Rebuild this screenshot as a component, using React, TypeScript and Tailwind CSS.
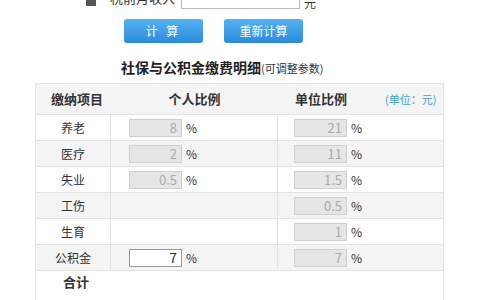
const rows = [
  { name: "养老", p: "8", u: "21" },
  { name: "医疗", p: "2", u: "11" },
  { name: "失业", p: "0.5", u: "1.5" },
  { name: "工伤", p: null, u: "0.5" },
  { name: "生育", p: null, u: "1" },
  { name: "公积金", p: "7", u: "7", editable: true },
];

function RateInput({ value, editable }: { value: string; editable?: boolean }) {
  return (
    <div className="flex items-center">
      <input
        readOnly
        value={value}
        className={
          editable
            ? "w-[53px] h-[18px] border border-[#9a9a9a] bg-white text-right pr-[4px] text-[14px] text-[#333] outline-none"
            : "w-[53px] h-[18px] border border-[#cfcfcf] bg-[#e6e6e6] text-right pr-[4px] text-[13px] text-[#aaa] outline-none"
        }
      />
      <span className="ml-[4px] text-[12px] text-[#333]">%</span>
    </div>
  );
}

export default function App() {
  return (
    <div
      className="w-[480px] h-[300px] overflow-hidden bg-white"
      style={{ fontFamily: '"Microsoft YaHei", "Noto Sans CJK SC", sans-serif' }}
    >
      <div className="flex items-end h-[9px] overflow-visible">
        <div className="flex items-end mt-[-12px] h-[21px]">
          <span className="ml-[86px] w-[10px] h-[10px] bg-[#555] mb-[3px]" />
          <span className="ml-[14px] w-[65px] whitespace-nowrap text-[13px] text-[#333] leading-none mb-[5px]">税前月收入</span>
          <div className="ml-[6px] w-[119px] h-[21px] border border-[#bbb] bg-white" />
          <span className="ml-[4px] text-[12px] text-[#333] leading-none">元</span>
        </div>
      </div>

      <div className="flex mt-[10px] ml-[124px] gap-[21px]">
        <button className="w-[79px] h-[24px] rounded-[3px] bg-gradient-to-b from-[#55b2f2] to-[#2b8bdb] text-white text-[12px] tracking-[3px]">
          计 算
        </button>
        <button className="w-[79px] h-[24px] rounded-[3px] bg-gradient-to-b from-[#55b2f2] to-[#2b8bdb] text-white text-[12px]">
          重新计算
        </button>
      </div>

      <div className="flex items-end ml-[121px] mt-[13px] h-[18px]">
        <span className="text-[14px] font-bold text-[#222] leading-none">社保与公积金缴费明细</span>
        <span className="text-[11px] text-[#333] leading-none">(可调整参数)</span>
      </div>

      <div className="ml-[35px] mt-[9px] w-[409px] border-l border-r border-t border-[#e3e3e3] text-[12px] text-[#333]">
        <div className="flex h-[31px] bg-[#f4f4f4] border-b border-[#e3e3e3] items-center font-bold text-[13px]">
          <div className="w-[75px] pl-[15px]">缴纳项目</div>
          <div className="w-[167px] text-center">个人比例</div>
          <div className="w-[72px] pl-[17px]">单位比例</div>
          <div className="flex-1 pl-[35px] font-normal text-[11px] text-[#3f9ed6]">(单位：元)</div>
        </div>
        {rows.map((r, i) => (
          <div
            key={r.name}
            className={
              "flex h-[26px] border-b border-[#e3e3e3] items-center " +
              (i % 2 === 1 ? "bg-[#f4f4f4]" : "bg-white")
            }
          >
            <div className="w-[75px] h-full flex items-center justify-center border-r border-[#e3e3e3]">{r.name}</div>
            <div className="w-[167px] h-full flex items-center pl-[18px] border-r border-[#e3e3e3]">
              {r.p !== null && <RateInput value={r.p} editable={r.editable} />}
            </div>
            <div className="flex-1 h-full flex items-center pl-[16px]">
              <RateInput value={r.u} />
            </div>
          </div>
        ))}
        <div className="h-[40px] pt-[1px]">
          <div className="pl-[27px] font-bold text-[13px]">合计</div>
          <div className="flex mt-[6px]">
            <span className="ml-[103px]">个人缴纳：</span>
            <span className="ml-[108px]">单位缴纳：</span>
          </div>
        </div>
      </div>
    </div>
  );
}
